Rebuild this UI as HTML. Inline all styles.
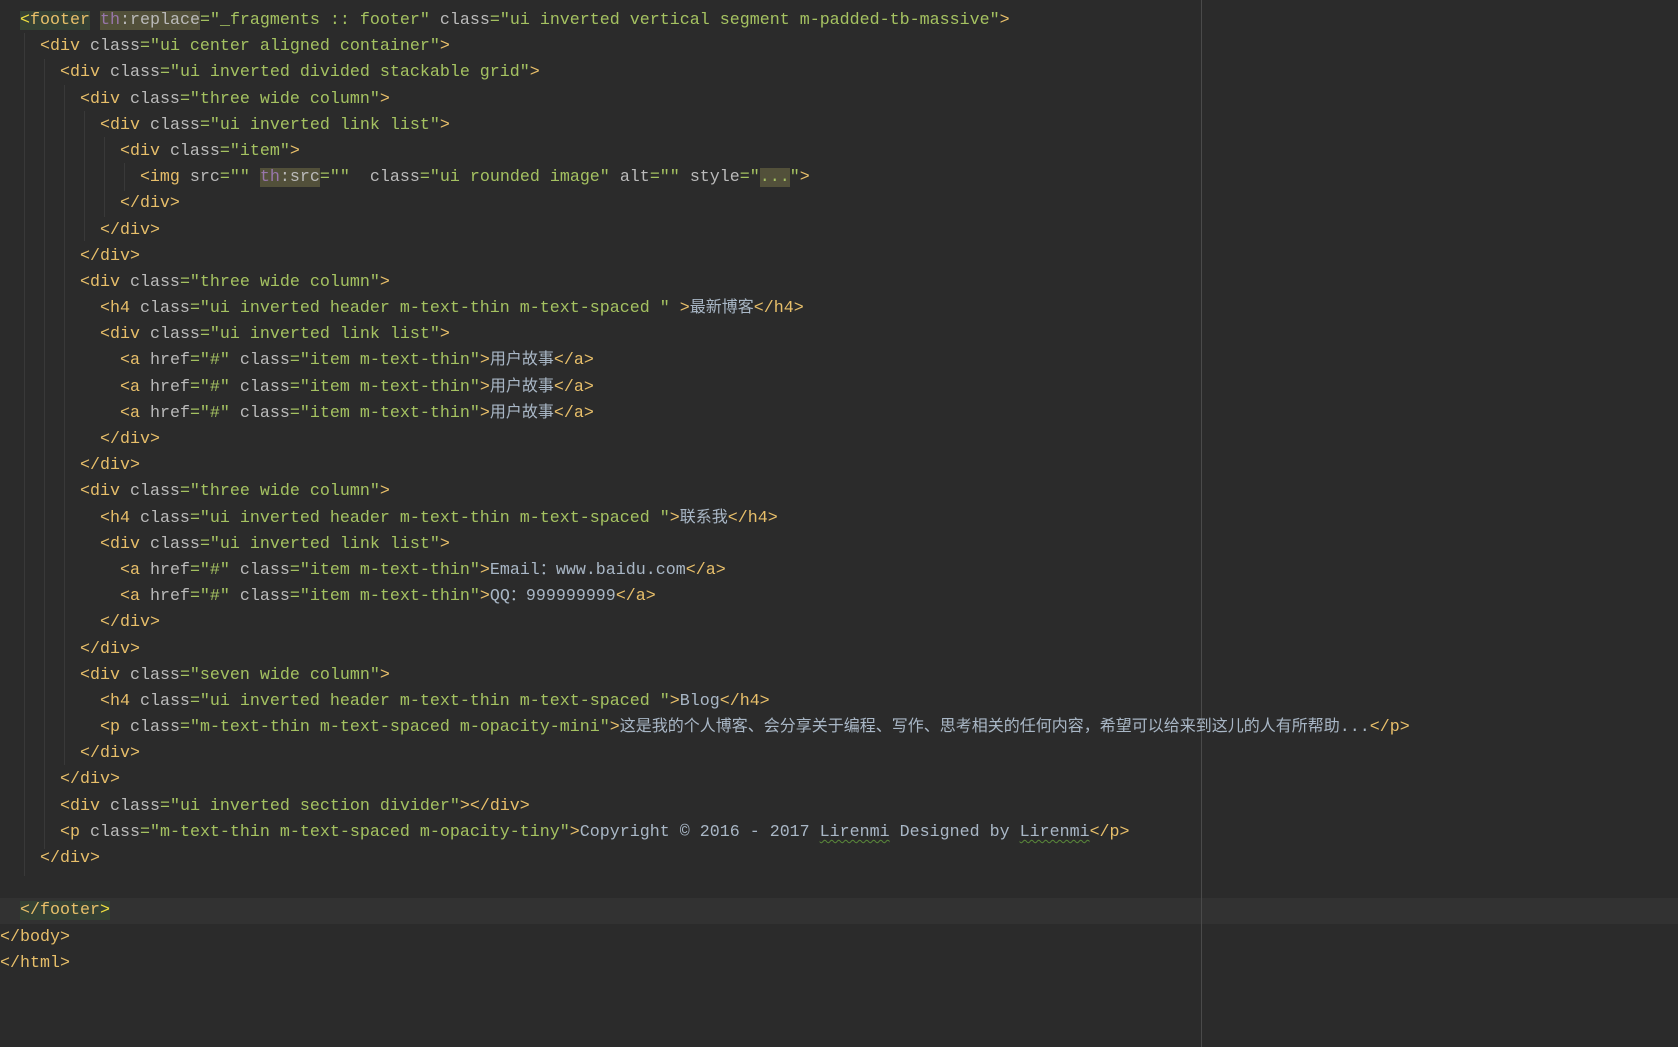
<!DOCTYPE html>
<html><head><meta charset="utf-8"><style>
html,body{margin:0;padding:0;background:#2b2b2b;width:1678px;height:1047px;overflow:hidden;position:relative}
.code{position:absolute;left:0;top:8px;font-family:"Liberation Mono","Noto Sans CJK SC",monospace;font-size:16.67px;line-height:26.2px;color:#a9b7c6}
.l{height:26.2px;position:relative;white-space:pre;overflow:visible}
.t{color:#e8bf6a}.a{color:#bababa}.v{color:#a5c261}.x{color:#a9b7c6}
.th{color:#9876aa}
.hl{background:#52503a}
.ft{background:#344134}
.y{color:#f0e040}
.cj{font-family:"Noto Sans CJK SC",sans-serif;font-size:16px;line-height:1;vertical-align:baseline;letter-spacing:0}
.u{text-decoration:underline wavy #5a8a3a;text-decoration-thickness:1px;text-underline-offset:3px}
.g{position:absolute;width:1px;background:#393939}
.cur{position:absolute;left:0;top:898px;width:1678px;height:26px;background:#323232}
.vl{position:absolute;left:1201px;top:0;width:1px;height:1047px;background:#4a4a4a}
</style></head><body>
<div class="cur"></div>
<div class="vl"></div>
<div class="g" style="left:24px;top:33px;height:843px"></div>
<div class="g" style="left:44px;top:59px;height:790px"></div>
<div class="g" style="left:64px;top:85px;height:680px"></div>
<div class="g" style="left:84px;top:111px;height:130px"></div>
<div class="g" style="left:104px;top:137px;height:80px"></div>
<div class="g" style="left:124px;top:163px;height:28px"></div>
<div class="code"><div class="l">  <span class="ft"><span class="y">&lt;</span><span class="t">footer</span></span> <span class="hl"><span class="th">th</span><span class="a">:replace</span></span><span class="v">="_fragments :: footer"</span> <span class="a">class</span><span class="v">="ui inverted vertical segment m-padded-tb-massive"</span><span class="t">&gt;</span></div><div class="l">    <span class="t">&lt;div </span><span class="a">class</span><span class="v">="ui center aligned container"</span><span class="t">&gt;</span></div><div class="l">      <span class="t">&lt;div </span><span class="a">class</span><span class="v">="ui inverted divided stackable grid"</span><span class="t">&gt;</span></div><div class="l">        <span class="t">&lt;div </span><span class="a">class</span><span class="v">="three wide column"</span><span class="t">&gt;</span></div><div class="l">          <span class="t">&lt;div </span><span class="a">class</span><span class="v">="ui inverted link list"</span><span class="t">&gt;</span></div><div class="l">            <span class="t">&lt;div </span><span class="a">class</span><span class="v">="item"</span><span class="t">&gt;</span></div><div class="l">              <span class="t">&lt;img </span><span class="a">src</span><span class="v">=""</span> <span class="hl"><span class="th">th</span><span class="a">:src</span></span><span class="v">=""</span>  <span class="a">class</span><span class="v">="ui rounded image"</span> <span class="a">alt</span><span class="v">=""</span> <span class="a">style</span><span class="v">="<span class="hl">...</span>"</span><span class="t">&gt;</span></div><div class="l">            <span class="t">&lt;/div&gt;</span></div><div class="l">          <span class="t">&lt;/div&gt;</span></div><div class="l">        <span class="t">&lt;/div&gt;</span></div><div class="l">        <span class="t">&lt;div </span><span class="a">class</span><span class="v">="three wide column"</span><span class="t">&gt;</span></div><div class="l">          <span class="t">&lt;h4 </span><span class="a">class</span><span class="v">="ui inverted header m-text-thin m-text-spaced "</span> <span class="t">&gt;</span><span class="cj">最新博客</span><span class="t">&lt;/h4&gt;</span></div><div class="l">          <span class="t">&lt;div </span><span class="a">class</span><span class="v">="ui inverted link list"</span><span class="t">&gt;</span></div><div class="l">            <span class="t">&lt;a </span><span class="a">href</span><span class="v">="#"</span> <span class="a">class</span><span class="v">="item m-text-thin"</span><span class="t">&gt;</span><span class="cj">用户故事</span><span class="t">&lt;/a&gt;</span></div><div class="l">            <span class="t">&lt;a </span><span class="a">href</span><span class="v">="#"</span> <span class="a">class</span><span class="v">="item m-text-thin"</span><span class="t">&gt;</span><span class="cj">用户故事</span><span class="t">&lt;/a&gt;</span></div><div class="l">            <span class="t">&lt;a </span><span class="a">href</span><span class="v">="#"</span> <span class="a">class</span><span class="v">="item m-text-thin"</span><span class="t">&gt;</span><span class="cj">用户故事</span><span class="t">&lt;/a&gt;</span></div><div class="l">          <span class="t">&lt;/div&gt;</span></div><div class="l">        <span class="t">&lt;/div&gt;</span></div><div class="l">        <span class="t">&lt;div </span><span class="a">class</span><span class="v">="three wide column"</span><span class="t">&gt;</span></div><div class="l">          <span class="t">&lt;h4 </span><span class="a">class</span><span class="v">="ui inverted header m-text-thin m-text-spaced "</span><span class="t">&gt;</span><span class="cj">联系我</span><span class="t">&lt;/h4&gt;</span></div><div class="l">          <span class="t">&lt;div </span><span class="a">class</span><span class="v">="ui inverted link list"</span><span class="t">&gt;</span></div><div class="l">            <span class="t">&lt;a </span><span class="a">href</span><span class="v">="#"</span> <span class="a">class</span><span class="v">="item m-text-thin"</span><span class="t">&gt;</span>Email<span class="cj">：</span>www.baidu.com<span class="t">&lt;/a&gt;</span></div><div class="l">            <span class="t">&lt;a </span><span class="a">href</span><span class="v">="#"</span> <span class="a">class</span><span class="v">="item m-text-thin"</span><span class="t">&gt;</span>QQ<span class="cj">：</span>999999999<span class="t">&lt;/a&gt;</span></div><div class="l">          <span class="t">&lt;/div&gt;</span></div><div class="l">        <span class="t">&lt;/div&gt;</span></div><div class="l">        <span class="t">&lt;div </span><span class="a">class</span><span class="v">="seven wide column"</span><span class="t">&gt;</span></div><div class="l">          <span class="t">&lt;h4 </span><span class="a">class</span><span class="v">="ui inverted header m-text-thin m-text-spaced "</span><span class="t">&gt;</span>Blog<span class="t">&lt;/h4&gt;</span></div><div class="l">          <span class="t">&lt;p </span><span class="a">class</span><span class="v">="m-text-thin m-text-spaced m-opacity-mini"</span><span class="t">&gt;</span><span class="cj">这是我的个人博客、会分享关于编程、写作、思考相关的任何内容，希望可以给来到这儿的人有所帮助</span>...<span class="t">&lt;/p&gt;</span></div><div class="l">        <span class="t">&lt;/div&gt;</span></div><div class="l">      <span class="t">&lt;/div&gt;</span></div><div class="l">      <span class="t">&lt;div </span><span class="a">class</span><span class="v">="ui inverted section divider"</span><span class="t">&gt;&lt;/div&gt;</span></div><div class="l">      <span class="t">&lt;p </span><span class="a">class</span><span class="v">="m-text-thin m-text-spaced m-opacity-tiny"</span><span class="t">&gt;</span>Copyright © 2016 - 2017 <span class="u">Lirenmi</span> Designed by <span class="u">Lirenmi</span><span class="t">&lt;/p&gt;</span></div><div class="l">    <span class="t">&lt;/div&gt;</span></div><div class="l"> </div><div class="l">  <span class="ft"><span class="t">&lt;/footer</span><span class="y">&gt;</span></span></div><div class="l"><span class="t">&lt;/body&gt;</span></div><div class="l"><span class="t">&lt;/html&gt;</span></div></div>
</body></html>
